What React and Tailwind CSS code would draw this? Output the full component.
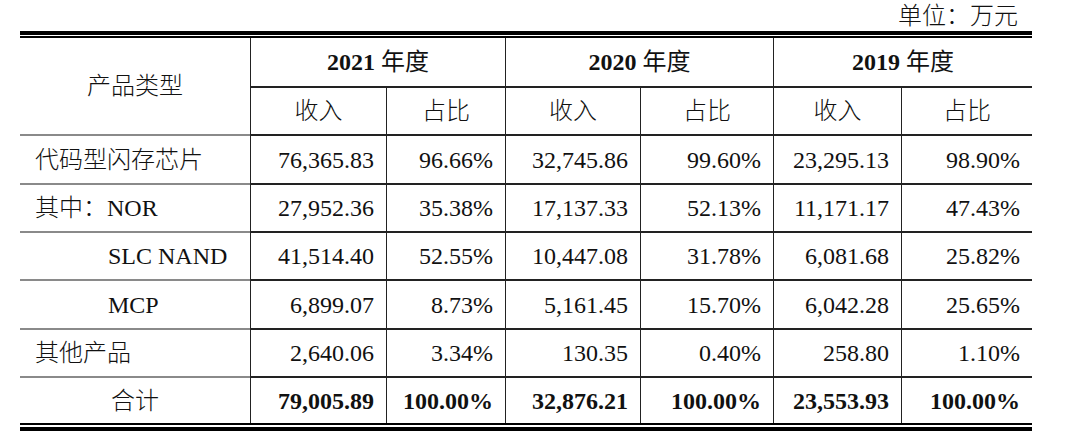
import React from 'react';

const rows = [
  { name: '代码型闪存芯片', vals: ['76,365.83', '96.66%', '32,745.86', '99.60%', '23,295.13', '98.90%'] },
  { name: '其中：NOR', vals: ['27,952.36', '35.38%', '17,137.33', '52.13%', '11,171.17', '47.43%'] },
  { name: 'SLC NAND', indent: true, vals: ['41,514.40', '52.55%', '10,447.08', '31.78%', '6,081.68', '25.82%'] },
  { name: 'MCP', indent: true, vals: ['6,899.07', '8.73%', '5,161.45', '15.70%', '6,042.28', '25.65%'] },
  { name: '其他产品', vals: ['2,640.06', '3.34%', '130.35', '0.40%', '258.80', '1.10%'] },
];

const total = ['79,005.89', '100.00%', '32,876.21', '100.00%', '23,553.93', '100.00%'];
const years = ['2021', '2020', '2019'];

const hLine = 'border-t-2 border-[#8a8a8a]';
const vLine = 'border-l border-[#222]';

export default function App() {
  return (
    <div className="w-[1080px] h-[439px] bg-white text-[#111] font-['Liberation_Serif','Noto_Sans_CJK_SC',serif] font-light text-[24px] leading-none">
      <div className="h-[31px] flex items-center justify-end pr-[62px] pt-[1px]">
        单位：万元
      </div>

      <div className="ml-[20px] w-[1012px]">
        <div className="h-[4px] bg-black" />
        <div className="h-[1px]" />
        <div className="h-[2px] bg-black" />

        <div className="grid grid-cols-[230px_136px_119px_135px_133px_128px_131px] grid-rows-[48px_48px_49px_48px_48px_49px_48px_47px]">
          {/* header */}
          <div className="row-span-2 flex items-center justify-center">产品类型</div>
          {years.map((y) => (
            <div key={y} className={`col-span-2 flex items-center justify-center ${vLine}`}>
              <span className="font-bold">{y}</span>
              <span className="font-normal">&nbsp;年度</span>
            </div>
          ))}
          {years.map((y) => (
            <React.Fragment key={y + 'sub'}>
              <div className={`flex items-center justify-center ${vLine} ${hLine}`}>收入</div>
              <div className={`flex items-center justify-center ${vLine} ${hLine}`}>占比</div>
            </React.Fragment>
          ))}

          {/* body */}
          {rows.map((r) => (
            <React.Fragment key={r.name}>
              <div className={`flex items-center ${hLine} ${r.indent ? 'pl-[88px]' : 'pl-[15px]'}`}>
                {r.name}
              </div>
              {r.vals.map((v, i) => (
                <div key={i} className={`flex items-center justify-end pr-[12px] ${vLine} ${hLine}`}>
                  {v}
                </div>
              ))}
            </React.Fragment>
          ))}

          <div className={`flex items-center justify-center ${hLine}`}>合计</div>
          {total.map((v, i) => (
            <div key={i} className={`flex items-center justify-end pr-[12px] font-bold ${vLine} ${hLine}`}>
              {v}
            </div>
          ))}
        </div>

        <div className="h-[2px] bg-black" />
        <div className="h-[2px]" />
        <div className="h-[4px] bg-black" />
      </div>
    </div>
  );
}
